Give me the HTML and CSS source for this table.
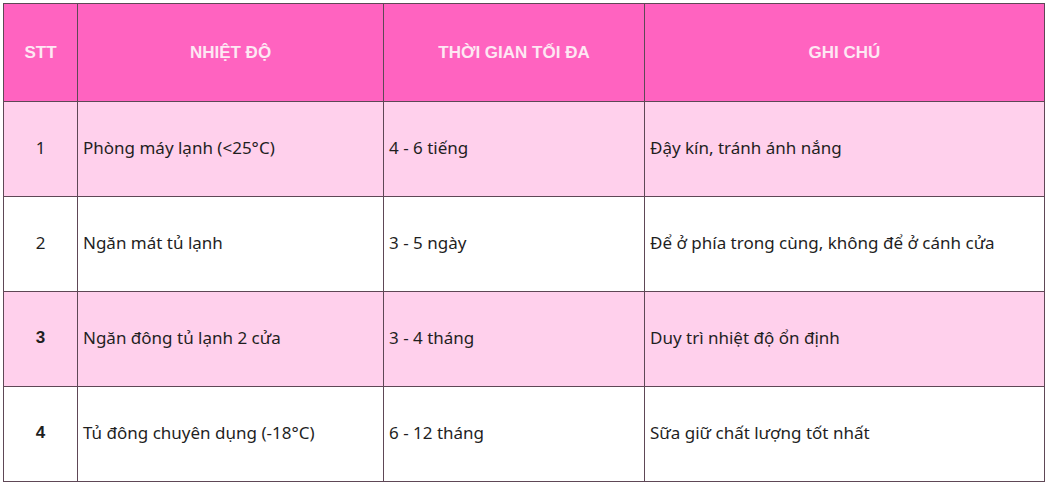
FILE: index.html
```html
<!DOCTYPE html>
<html lang="vi">
<head>
<meta charset="utf-8">
<link rel="stylesheet" href="styles.css">
</head>
<body>
<table class="storage">
  <colgroup>
    <col class="c-stt">
    <col class="c-temp">
    <col class="c-time">
    <col class="c-note">
  </colgroup>
  <thead>
    <tr>
      <th>STT</th>
      <th>NHIỆT ĐỘ</th>
      <th>THỜI GIAN TỐI ĐA</th>
      <th>GHI CHÚ</th>
    </tr>
  </thead>
  <tbody>
    <tr class="pink">
      <td class="num">1</td>
      <td>Phòng máy lạnh (&lt;25°C)</td>
      <td>4 - 6 tiếng</td>
      <td>Đậy kín, tránh ánh nắng</td>
    </tr>
    <tr>
      <td class="num">2</td>
      <td>Ngăn mát tủ lạnh</td>
      <td>3 - 5 ngày</td>
      <td>Để ở phía trong cùng, không để ở cánh cửa</td>
    </tr>
    <tr class="pink">
      <td class="num bold">3</td>
      <td>Ngăn đông tủ lạnh 2 cửa</td>
      <td>3 - 4 tháng</td>
      <td>Duy trì nhiệt độ ổn định</td>
    </tr>
    <tr>
      <td class="num bold">4</td>
      <td>Tủ đông chuyên dụng (-18°C)</td>
      <td>6 - 12 tháng</td>
      <td>Sữa giữ chất lượng tốt nhất</td>
    </tr>
  </tbody>
</table>
</body>
</html>
```

FILE: styles.css
```css
html, body {
  margin: 0;
  padding: 0;
  background: #ffffff;
}

body {
  padding: 3px 0 0 3px;
}

.storage {
  border-collapse: collapse;
  table-layout: fixed;
  width: 1041px;
  font-family: "Noto Sans", "Liberation Sans", sans-serif;
  color: #1f1f1f;
}

.c-stt { width: 74px; }
.c-temp { width: 306px; }
.c-time { width: 261px; }
.c-note { width: 400px; }

.storage th,
.storage td {
  border: 1px solid #5e4756;
  height: 95px;
  box-sizing: border-box;
  vertical-align: middle;
  padding: 0 5px 3px;
}

.storage th {
  background: #ff63c0;
  color: #fde8f3;
  font-family: "Liberation Sans", Arial, sans-serif;
  font-weight: 700;
  font-size: 17px;
  text-align: center;
  height: 98px;
  padding: 0 5px;
}

.storage td {
  font-size: 17px;
  text-align: left;
}

.storage tr.pink td {
  background: #ffd0ec;
}

.storage td.num {
  text-align: center;
}

.storage td.bold {
  font-weight: 700;
  font-family: "Liberation Sans", Arial, sans-serif;
}
```
